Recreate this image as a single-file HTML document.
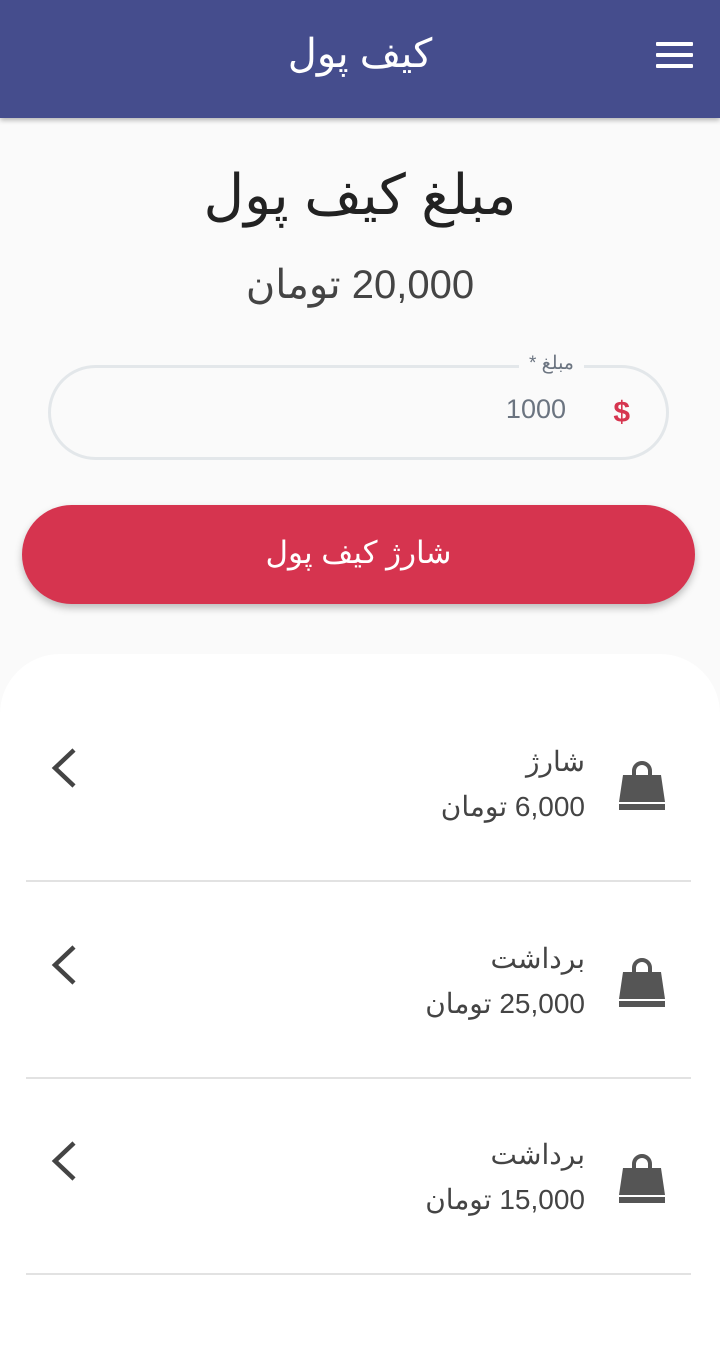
<!DOCTYPE html>
<html lang="fa" dir="rtl"><head><meta charset="utf-8">
<style>
*{margin:0;padding:0;box-sizing:border-box}
body{width:720px;height:1336px;background:#fafafa;font-family:"Liberation Sans","Noto Sans CJK SC",sans-serif;position:relative;overflow:hidden}
.hdr{position:absolute;top:0;left:0;width:720px;height:118px;background:#454d8d;box-shadow:0 2px 5px rgba(0,0,0,.3)}
.hdr .t{position:absolute;top:31px;left:0;width:720px;text-align:center;color:#fff;font-size:40px}
.menu{position:absolute;left:656px;top:42px;width:37px}
.menu i{display:block;height:4px;background:#fff;margin-bottom:7px;border-radius:1px}
.abs{position:absolute;left:0;width:720px;text-align:center}
.field{position:absolute;left:48px;top:365px;width:621px;height:95px;border:3px solid #e3e7ea;border-radius:48px}
.lbl{position:absolute;right:82px;top:-16px;background:#fafafa;padding:0 10px;color:#6b7480;font-size:19px}
.val{position:absolute;right:100px;top:26px;color:#6b7480;font-size:27px}
.dol{position:absolute;right:36px;top:28px;color:#d6354f;font-size:30px;font-weight:bold}
.btn{position:absolute;left:22px;top:505px;width:673px;height:99px;background:#d6344f;border-radius:50px;box-shadow:0 4px 8px rgba(0,0,0,.25);color:#fff;font-size:31px;text-align:center;line-height:96px}
.card{position:absolute;left:0;top:654px;width:720px;height:700px;background:#fff;border-radius:60px 60px 0 0}
.row{position:absolute;left:26px;width:665px;height:197px;border-bottom:2px solid #e2e2e2}
.row .a{position:absolute;right:106px;top:60px;font-size:28px;color:#444}
.row .b{position:absolute;right:106px;top:105px;font-size:28px;color:#444}
.row svg.bag{position:absolute;right:24px}
.row svg.ch{position:absolute;left:24px}
</style></head><body>
<div class="hdr"><div class="t">کیف پول</div><div class="menu"><i></i><i></i><i></i></div></div>
<div class="abs" style="top:162px;font-size:56px;color:#222">مبلغ کیف پول</div>
<div class="abs" style="top:262px;font-size:40px;color:#444">20,000 تومان</div>
<div class="field"><div class="lbl">مبلغ *</div><div class="val">1000</div><div class="dol">$</div></div>
<div class="btn">شارژ کیف پول</div>
<div class="card"></div>
<div class="row" style="top:685px"><div class="a">شارژ</div><div class="b">6,000 تومان</div>
<svg class="bag" style="top:74px" width="50" height="52" viewBox="0 0 50 52"><path d="M17 20V12a8 8 0 0 1 16 0v8" fill="none" stroke="#555" stroke-width="4"/><path d="M6 16h38l4 27H2z" fill="#555"/><path d="M2 45h46v6H2z" fill="#555"/></svg>
<svg class="ch" style="top:62px" width="28" height="42" viewBox="0 0 28 42"><path d="M24 3L5 21l19 18" fill="none" stroke="#444" stroke-width="4.5"/></svg></div>
<div class="row" style="top:882px"><div class="a">برداشت</div><div class="b">25,000 تومان</div>
<svg class="bag" style="top:74px" width="50" height="52" viewBox="0 0 50 52"><path d="M17 20V12a8 8 0 0 1 16 0v8" fill="none" stroke="#555" stroke-width="4"/><path d="M6 16h38l4 27H2z" fill="#555"/><path d="M2 45h46v6H2z" fill="#555"/></svg>
<svg class="ch" style="top:62px" width="28" height="42" viewBox="0 0 28 42"><path d="M24 3L5 21l19 18" fill="none" stroke="#444" stroke-width="4.5"/></svg></div>
<div class="row" style="top:1078px"><div class="a">برداشت</div><div class="b">15,000 تومان</div>
<svg class="bag" style="top:74px" width="50" height="52" viewBox="0 0 50 52"><path d="M17 20V12a8 8 0 0 1 16 0v8" fill="none" stroke="#555" stroke-width="4"/><path d="M6 16h38l4 27H2z" fill="#555"/><path d="M2 45h46v6H2z" fill="#555"/></svg>
<svg class="ch" style="top:62px" width="28" height="42" viewBox="0 0 28 42"><path d="M24 3L5 21l19 18" fill="none" stroke="#444" stroke-width="4.5"/></svg></div>
</body></html>
